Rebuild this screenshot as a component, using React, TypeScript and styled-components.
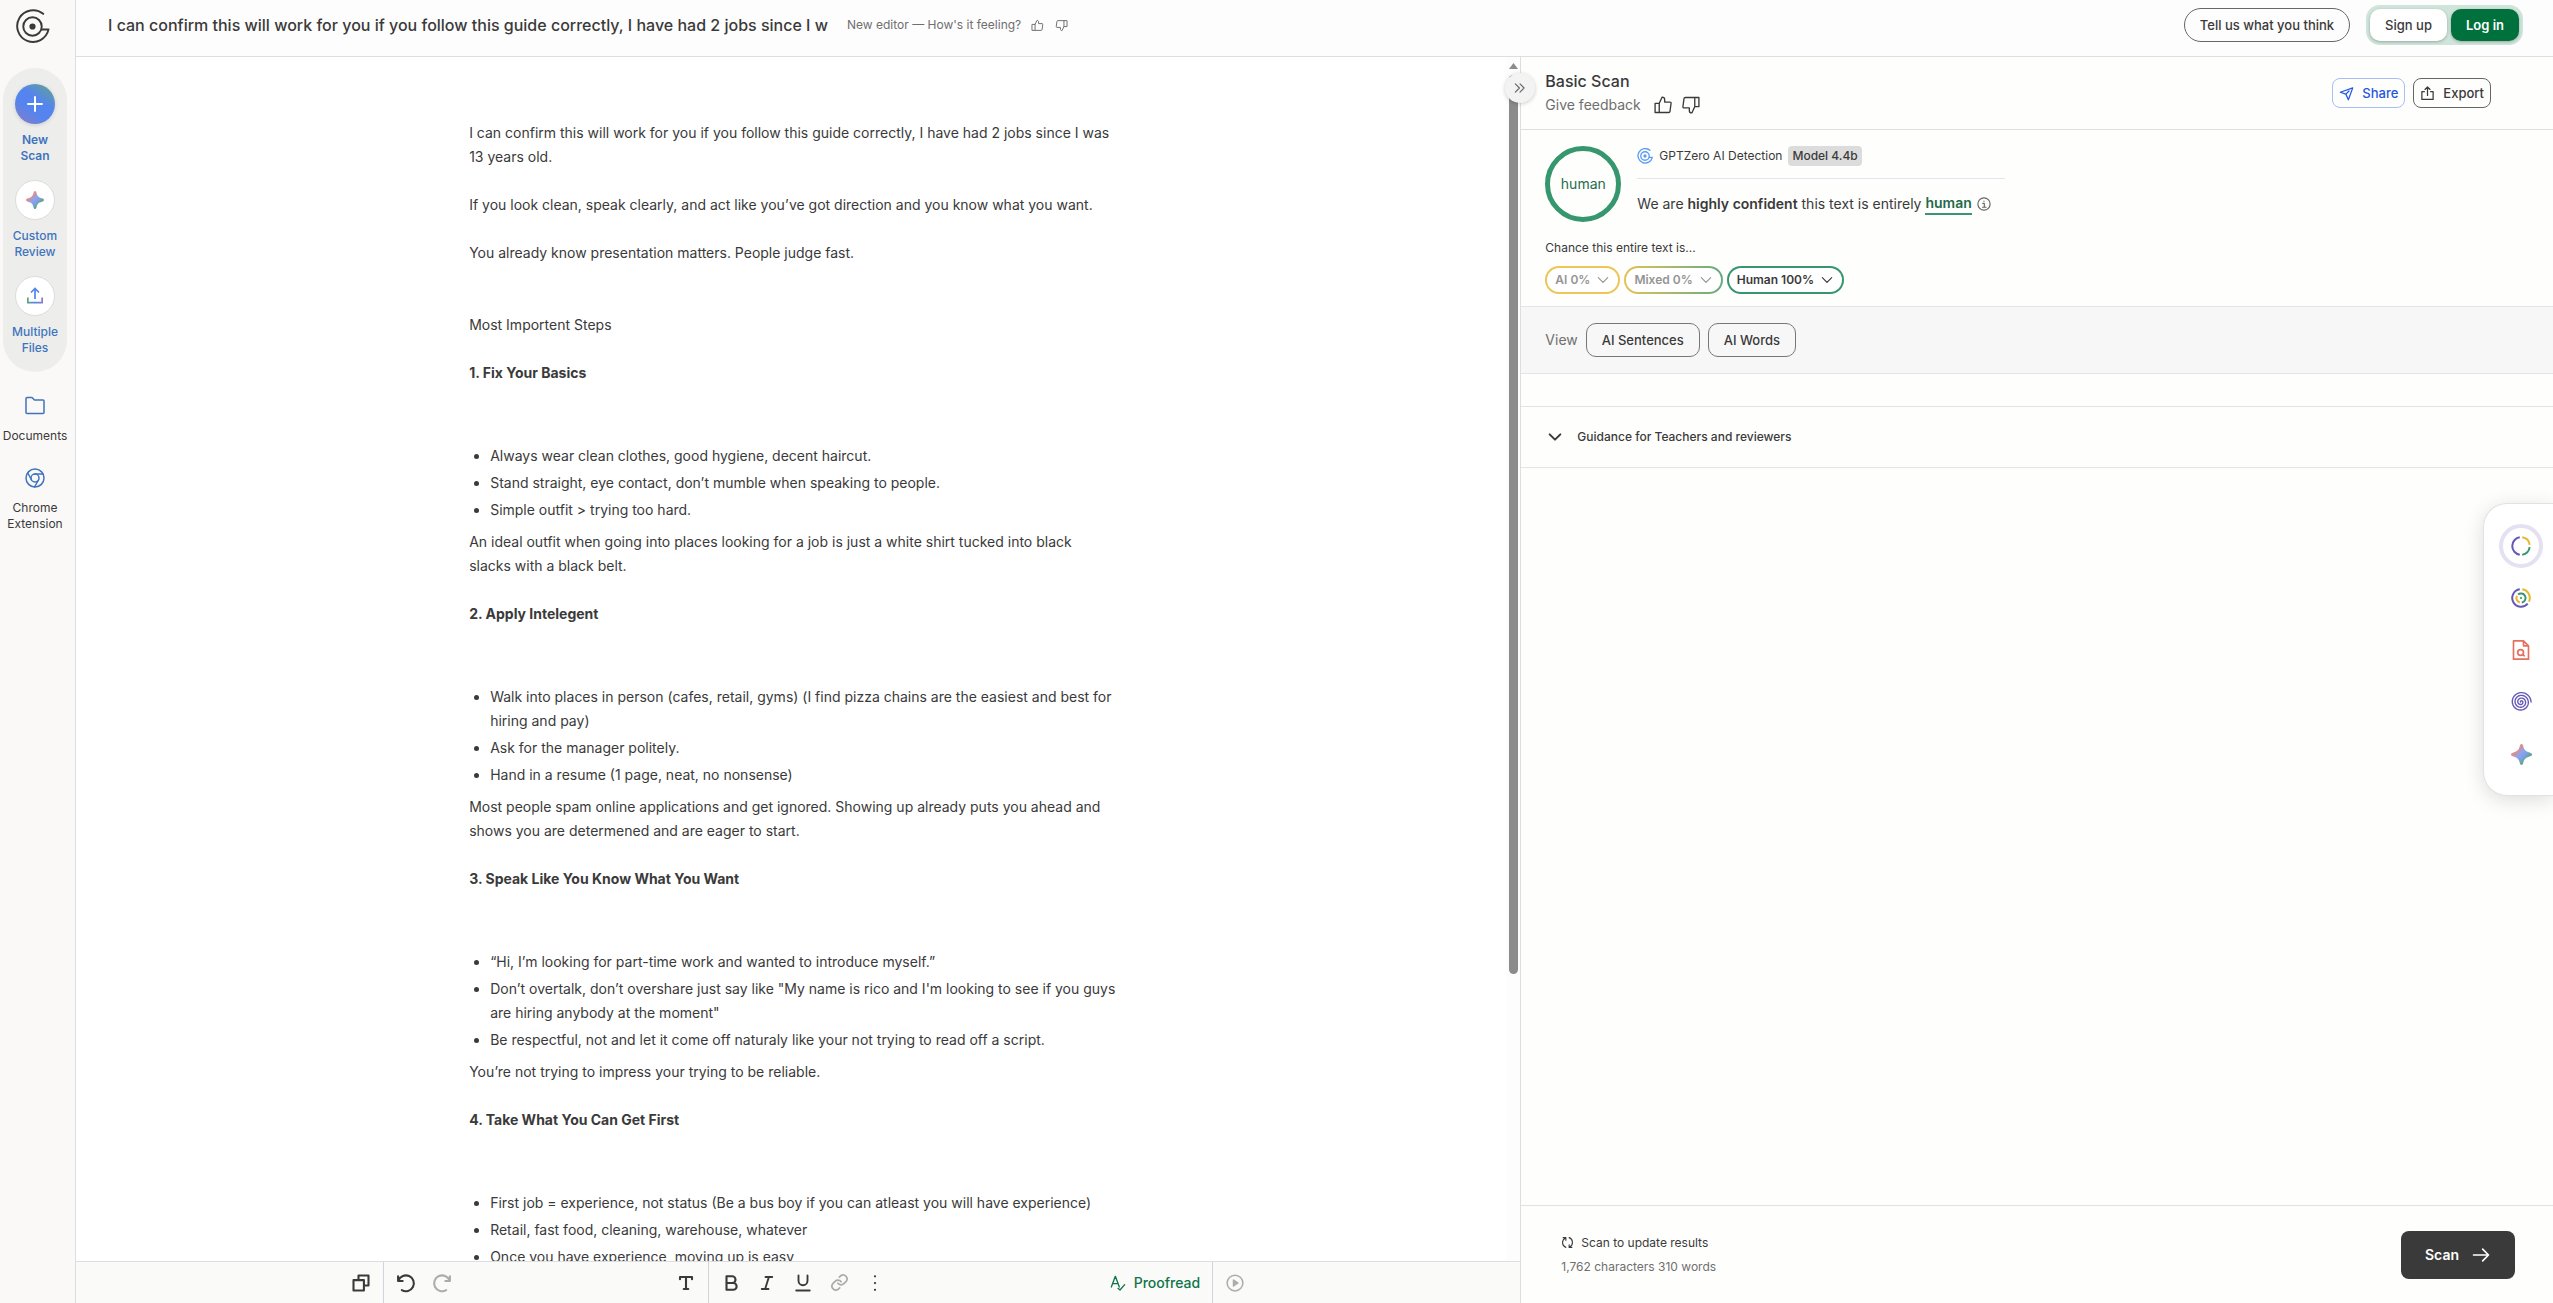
import React from "react";
import styled, { createGlobalStyle, css } from "styled-components";

const ink = "#3a3a3a";
const muted = "#6f6f6f";
const line = "#dedee0";
const green = "#36966e";
const blue = "#3f74bd";

const GlobalStyle = createGlobalStyle`
  * { box-sizing: border-box; }
  body { margin: 0; background: #fff; color: ${ink}; font: 400 14px/20px Inter, "Liberation Sans", sans-serif; }
  button, input { font: inherit; color: inherit; margin: 0; padding: 0; border: 0; background: none; }
  button { cursor: pointer; }
  a { color: inherit; text-decoration: none; }
  svg { display: block; flex: none; }
  h1, h2, h3, p, ul { margin: 0; padding: 0; }
`;

const Page = styled.div`display: flex; height: 100vh; overflow: hidden;`;

/* Sidebar */
const Sidebar = styled.nav`
  width: 76px; flex: none; display: flex; flex-direction: column; align-items: flex-start;
  background: #faf9f8; border-right: 1px solid ${line}; padding: 9px 3px 0;
`;
const LogoLink = styled.a`margin: 0 12px 24px;`;
const ActionGroup = styled.div`
  width: 64px; padding: 16px 0; border-radius: 32px; background: #ededec;
  display: flex; flex-direction: column; gap: 16px;
`;
const NavItem = styled.a<{ $strong?: boolean; $plain?: boolean }>`
  width: 64px; display: flex; flex-direction: column; align-items: center; gap: ${p => (p.$plain ? 12 : 8)}px;
  text-align: center; font-size: 12px; line-height: 16px;
  font-weight: ${p => (p.$strong ? 600 : p.$plain ? 400 : 500)}; color: ${p => (p.$plain ? ink : blue)};
`;
const NavExtras = styled.div`display: flex; flex-direction: column; gap: 24px; padding-top: 24px;`;
const RoundIcon = styled.span<{ $filled?: boolean }>`
  width: 40px; height: 40px; border-radius: 50%; display: grid; place-items: center;
  background: ${p => (p.$filled ? "linear-gradient(35deg, #8c7cc0 0%, #5584ee 38%, #5584ee 60%, #62a882 100%)" : "#fff")};
  border: ${p => (p.$filled ? "0" : "1px solid #dcdcdc")};
  box-shadow: ${p => (p.$filled ? "0 1px 4px #0002" : "none")};
`;

/* Top bar */
const Main = styled.div`flex: 1; min-width: 0; display: flex; flex-direction: column;`;
const TopBar = styled.header`
  height: 57px; flex: none; border-bottom: 1px solid ${line}; padding: 0 30px 6px 32px;
  display: flex; align-items: center; background: #fdfdfd;
`;
const TitleInput = styled.input`width: 733px; font-size: 16px; font-weight: 500; line-height: 24px; outline: 0;`;
const EditorNote = styled.div`display: flex; align-items: center; gap: 8px; padding-left: 6px; font-size: 12px; color: ${muted};`;
const IconButton = styled.button<{ $faded?: boolean; $tight?: boolean }>`
  display: grid; place-items: center; width: ${p => (p.$tight ? 16 : 20)}px; height: 20px; opacity: ${p => (p.$faded ? 0.4 : 1)};
`;
const Account = styled.div`margin-left: auto; display: flex; align-items: center; gap: 16px;`;
const AuthGroup = styled.div`display: flex; gap: 4px; padding: 4px; border-radius: 14px; background: #cfe4da;`;
const Button = styled.button<{ $tone?: "outline" | "white" | "green" }>`
  height: ${p => (p.$tone === "outline" ? 34 : 32)}px; padding: 0 15px; font-size: 13px; font-weight: 500; white-space: nowrap;
  border-radius: 10px;
  ${p => p.$tone === "outline" && css`border: 1px solid #666; border-radius: 17px;`}
  ${p => p.$tone === "white" && css`background: #fff; box-shadow: 0 1px 3px #0004;`}
  ${p => p.$tone === "green" && css`background: #00703c; color: #fff; font-weight: 600; box-shadow: 0 1px 3px #0004;`}
`;

/* Editor */
const Workspace = styled.div`flex: 1; min-height: 0; display: flex;`;
const EditorPane = styled.main`flex: 7 1 0; min-width: 0; display: flex; flex-direction: column; background: #fff;`;
const EditorScroll = styled.div`flex: 1; min-height: 0; display: flex; overflow: hidden;`;
const PageArea = styled.div`flex: 1; min-width: 0; overflow: hidden; padding: 64px 44px 0 48px; display: flex; justify-content: center;`;
const Doc = styled.article`width: 100%; max-width: 648px; font-size: 14px; line-height: 24px;`;
const Paragraph = styled.p<{ $space?: number }>`margin-bottom: ${p => p.$space ?? 24}px;`;
const StepTitle = styled.h3`font-size: 14px; line-height: 24px; font-weight: 700;`;
const Bullets = styled.ul`
  list-style: disc; padding-left: 21px; margin: 59px 0 8px; display: flex; flex-direction: column; gap: 3px;
`;
const ScrollTrack = styled.div`
  width: 14px; flex: none; display: flex; flex-direction: column; align-items: center; gap: 6px; padding-top: 6px; background: #fdfdfd;
`;
const ScrollThumb = styled.div`width: 9px; height: 75%; border-radius: 5px; background: #8b8b8b;`;
const ToolbarWrap = styled.div`height: 42px; flex: none; border-top: 1px solid ${line}; background: #fafaf9; display: flex; justify-content: center;`;
const Toolbar = styled.div`width: 100%; max-width: 894px; display: flex; justify-content: space-between;`;
const Tools = styled.div`display: flex; align-items: center; gap: 12px;`;
const ToolSet = styled.div`display: flex; align-items: center; gap: 16px;`;
const Divider = styled.span`width: 1px; align-self: stretch; background: #d3d3dd;`;
const Proofread = styled.button`display: flex; align-items: center; gap: 8px; color: #0f7548; font-weight: 500; font-size: 14px;`;

/* Results panel */
const Panel = styled.aside`
  flex: 5 1 0; min-width: 0; display: flex; flex-direction: column; position: relative;
  border-left: 1px solid ${line}; background: #fefefd;
`;
const Collapse = styled.button`
  position: absolute; left: -16px; top: 16px; width: 30px; height: 30px; border-radius: 50%;
  display: grid; place-items: center; background: #f3f3f3; box-shadow: 0 1px 4px #0003; color: #666;
`;
const PanelHead = styled.div`
  display: flex; justify-content: space-between; align-items: center; height: 73px;
  padding: 0 62px 0 24px; border-bottom: 1px solid ${line};
`;
const PanelTitle = styled.h1`font-size: 16px; line-height: 24px; font-weight: 500;`;
const Feedback = styled.div`display: flex; align-items: center; gap: 12px; height: 24px; color: ${muted}; font-size: 14px;`;
const Votes = styled.span`display: flex; gap: 8px; color: ${ink};`;
const Row = styled.div<{ $gap?: number }>`display: flex; align-items: center; gap: ${p => p.$gap ?? 8}px;`;
const SmallButton = styled.button<{ $blue?: boolean }>`
  height: 30px; padding: 0 6px; display: flex; align-items: center; gap: 8px; border-radius: 8px;
  font-size: 13px; font-weight: 500; border: 1px solid ${p => (p.$blue ? "#a9bdf8" : "#666")}; color: ${p => (p.$blue ? "#2457e0" : ink)};
`;
const Result = styled.section`padding: 16px 24px 12px; border-bottom: 1px solid #e4e4e8;`;
const Verdict = styled.div`display: flex; gap: 16px;`;
const Ring = styled.div`
  width: 76px; height: 76px; flex: none; border-radius: 50%; border: 5px solid ${green}; color: #266b50;
  display: grid; place-items: center; font-size: 14px;
`;
const VerdictText = styled.div`display: flex; flex-direction: column; min-width: 368px;`;
const Detector = styled.div`
  display: flex; align-items: center; gap: 6px; font-size: 12px; padding-bottom: 12px; border-bottom: 1px solid #e4e4ee;
`;
const Badge = styled.span`padding: 0 4px; border-radius: 4px; background: #dcdcdc; font-weight: 500; line-height: 20px;`;
const Sentence = styled.p`
  display: flex; align-items: center; padding-top: 14px; white-space: pre; font-size: 14px; line-height: 20px;
  b { font-weight: 600; }
`;
const HumanWord = styled.b`color: #1f6b4b; border-bottom: 2px solid ${green}; margin-right: 5px;`;
const ChanceLabel = styled.p`font-size: 12px; line-height: 16px; padding: 18px 0 10px;`;
const pillEdge = {
  ai: "#ecc656, #ecc656",
  mixed: "#e3c458, #66ab83",
  human: `${green}, ${green}`,
};
const Pill = styled.button<{ $kind: keyof typeof pillEdge }>`
  height: 28px; padding: 0 8px; display: flex; align-items: center; gap: 6px; border: 2px solid transparent; border-radius: 14px;
  background: linear-gradient(#fff, #fff) padding-box, linear-gradient(90deg, ${p => pillEdge[p.$kind]}) border-box;
  font-size: 12px; font-weight: 600; color: ${p => (p.$kind === "human" ? ink : "#949494")};
`;
const ViewBar = styled.section`
  display: flex; align-items: center; gap: 8px; height: 67px; padding: 0 24px; background: #f7f7f7; border-bottom: 1px solid #e4e4e8; color: ${muted};
`;
const ViewButton = styled.button`
  height: 34px; padding: 0 15px; border: 1px solid #777; border-radius: 10px; font-size: 13px; font-weight: 500; color: ${ink};
`;
const Guidance = styled.button`
  width: 100%; height: 62px; margin-top: 32px; padding: 0 26px; display: flex; align-items: center; gap: 14px; text-align: left;
  border-top: 1px solid #e4e4e8; border-bottom: 1px solid #e4e4e8; font-size: 12px; font-weight: 500;
`;
const PanelFoot = styled.footer`
  margin-top: auto; height: 98px; padding: 0 38px 0 40px; border-top: 1px solid #e2e2e2;
  display: flex; align-items: center; justify-content: space-between;
`;
const Stats = styled.div`font-size: 12px; line-height: 24px; color: ${muted};`;
const UpdateNote = styled.div`display: flex; align-items: center; gap: 7px; color: ${ink};`;
const ScanButton = styled.button`
  height: 48px; padding: 0 24px; display: flex; align-items: center; gap: 12px; border-radius: 8px; background: #3a3a3a; color: #fff; font-size: 14px; font-weight: 600;
`;

/* Dock over the right edge */
const Dock = styled.div`
  position: fixed; right: 0; top: 503px; width: 70px; padding: 20px 0 19px 15px; border-radius: 24px 0 0 24px;
  background: #fff; border: 1px solid #e2e2e2; border-right: 0; box-shadow: 0 4px 20px #0002; display: flex; flex-direction: column; gap: 8px;
`;
const DockButton = styled.button<{ $active?: boolean }>`
  width: 44px; height: 44px; border-radius: 50%; display: grid; place-items: center; border: 4px solid ${p => (p.$active ? "#e4e2f2" : "transparent")};
`;

/* Icons */
const Icon = ({ size = 16, w = 1.5, box = 24, color = "currentColor", children }: { size?: number; w?: number; box?: number; color?: string; children: React.ReactNode }) => (
  <svg width={size} height={size} viewBox={`0 0 ${box} ${box}`} fill="none" stroke={color} strokeWidth={w} strokeLinecap="round" strokeLinejoin="round" aria-hidden="true">{children}</svg>
);
const Logo = ({ size, color = ink, w = 2 }: { size: number; color?: string; w?: number }) => (
  <Icon size={size} box={36} color={color} w={w}>
    <path d="M29 5A16.3 16.3 0 1 0 34.500 21H27.500" />
    <circle cx="18" cy="18" r="9.500" />
    <circle cx="18" cy="18" r="2.200" fill={color} />
  </Icon>
);
const Thumb = ({ size, down, w = 1.5 }: { size: number; down?: boolean; w?: number }) => (
  <Icon size={size} w={w}>
    <g transform={down ? "rotate(180 12 12)" : undefined}>
      <path d="M2.500 10h5v11h-5zM7.500 10 11 2.500c1.800 0 3 1.200 3 3V8.500h6.500c.8 0 1.300.6 1.200 1.400l-1.300 9.700c-.1.800-.8 1.400-1.600 1.400H7.500" />
    </g>
  </Icon>
);
const Sparkle = ({ size, id }: { size: number; id: string }) => (
  <svg width={size} height={size} viewBox="0 0 24 24" aria-hidden="true">
    <defs><linearGradient id={id} x1="0" y1="0" x2="1" y2="1"><stop offset=".27" stopColor="#e58c84" /><stop offset=".46" stopColor="#8ba5ee" /><stop offset=".6" stopColor="#7e9fe8" /><stop offset=".74" stopColor="#5aa879" /></linearGradient></defs>
    <path fill={`url(#${id})`} d="M12 0c1.200 0 1.600 1 2 2.500 1.200 4.300 2.600 5.900 7.200 7.100C23 10.200 24 10.800 24 12s-1 1.700-2.800 2.300c-4.600 1.300-6 2.800-7.200 7.200C13.600 23 13.200 24 12 24s-1.600-1-2-2.500c-1.200-4.400-2.600-5.900-7.200-7.200C1 13.700 0 13.200 0 12s1-1.800 2.800-2.400C7.400 8.400 8.800 6.800 10 2.500 10.400 1 10.800 0 12 0Z" />
  </svg>
);
const Upload = () => (
  <svg width="18" height="18" viewBox="0 0 18 18" fill="none" strokeWidth="1.700" aria-hidden="true">
    <defs><linearGradient id="tray"><stop stopColor="#5aa879" /><stop offset=".5" stopColor="#5584ee" /><stop offset="1" stopColor="#8c7cc0" /></linearGradient></defs>
    <path fill="url(#tray)" stroke="none" d="M1 10.500h1.700v4.300h12.600v-4.300H17v6H1z" /><path stroke="#5584ee" d="M9 12V2M5 5.500l4-4 4 4" />
  </svg>
);
const ChevronDown = ({ size, w }: { size: number; w?: number }) => <Icon size={size} w={w}><path d="m4 8 8 8 8-8" /></Icon>;

const arc = (r: number, a: number, b: number) => {
  const at = (d: number) => `${12 + r * Math.sin((d * Math.PI) / 180)} ${12 - r * Math.cos((d * Math.PI) / 180)}`;
  return `M${at(a)}A${r} ${r} 0 ${b - a > 180 ? 1 : 0} 1 ${at(b)}`;
};
const spiral = Array.from({ length: 120 }, (_, i) => {
  const t = (1 - i / 119) * Math.PI * 7;
  const r = 0.5 + (i / 119) * 10.5;
  return `${i ? "L" : "M"}${12 + r * Math.cos(t)} ${12 + r * Math.sin(-t)}`;
}).join("");
const Segments = () => (
  <svg width="20" height="20" viewBox="0 0 24 24" fill="none" strokeWidth="2.400" aria-hidden="true">
    <path stroke="#6559b5" d={arc(10.5, 188, 352)} /><path stroke="#e6b830" d={arc(10.5, 8, 82)} /><path stroke="#36966e" d={arc(10.5, 98, 172)} />
  </svg>
);
const Target = () => (
  <svg width="20" height="20" viewBox="0 0 24 24" fill="none" strokeWidth="2.400" aria-hidden="true">
    <path stroke="#6559b5" d={arc(10.5, 130, 352)} /><path stroke="#e6b830" d={arc(10.5, 8, 115)} />
    <path stroke="#36966e" d={arc(5.5, -40, 170)} /><path stroke="#e6b830" d={arc(5.5, 195, 300)} /><circle cx="12" cy="12" r="1.300" fill="#36966e" />
  </svg>
);

const steps = [
  { title: "1. Fix Your Basics", items: ["Always wear clean clothes, good hygiene, decent haircut.", "Stand straight, eye contact, don’t mumble when speaking to people.", "Simple outfit > trying too hard."], after: "An ideal outfit when going into places looking for a job is just a white shirt tucked into black slacks with a black belt." },
  { title: "2. Apply Intelegent", items: ["Walk into places in person (cafes, retail, gyms) (I find pizza chains are the easiest and best for hiring and pay)", "Ask for the manager politely.", "Hand in a resume (1 page, neat, no nonsense)"], after: "Most people spam online applications and get ignored. Showing up already puts you ahead and shows you are determened and are eager to start." },
  { title: "3. Speak Like You Know What You Want", items: ["“Hi, I’m looking for part-time work and wanted to introduce myself.”", "Don’t overtalk, don’t overshare just say like \"My name is rico and I'm looking to see if you guys are hiring anybody at the moment\"", "Be respectful, not and let it come off naturaly like your not trying to read off a script."], after: "You’re not trying to impress your trying to be reliable." },
  { title: "4. Take What You Can Get First", items: ["First job = experience, not status (Be a bus boy if you can atleast you will have experience)", "Retail, fast food, cleaning, warehouse, whatever", "Once you have experience, moving up is easy"], after: "" },
];

export default function App() {
  return (
    <Page>
      <GlobalStyle />
      <Sidebar aria-label="Main">
        <LogoLink href="#" aria-label="GPTZero"><Logo size={35} /></LogoLink>
        <ActionGroup>
          <NavItem href="#" $strong><RoundIcon $filled><Icon size={16} box={16} w={2} color="#fff"><path d="M8 1v14M1 8h14" /></Icon></RoundIcon><span>New<br />Scan</span></NavItem>
          <NavItem href="#"><RoundIcon><Sparkle size={18} id="nav-spark" /></RoundIcon><span>Custom<br />Review</span></NavItem>
          <NavItem href="#"><RoundIcon><Upload /></RoundIcon><span>Multiple<br />Files</span></NavItem>
        </ActionGroup>
        <NavExtras>
          <NavItem href="#" $plain>
            <Icon size={20} box={20} color={blue}><path d="M1 16.500v-14c0-.5.400-1 1-1h5l2.500 2.500H18c.6 0 1 .4 1 1v11.500c0 .6-.4 1-1 1H2c-.6 0-1-.4-1-1Z" /></Icon>
            Documents
          </NavItem>
          <NavItem href="#" $plain>
            <Icon size={20} box={20} color={blue}><circle cx="10" cy="10" r="9" /><circle cx="10" cy="10" r="4" /><path d="M10 6h8M6.500 12 2.800 5M13.500 12l-4 7" /></Icon>
            <span>Chrome<br />Extension</span>
          </NavItem>
        </NavExtras>
      </Sidebar>
      <Main>
        <TopBar>
          <TitleInput aria-label="Document title" defaultValue="I can confirm this will work for you if you follow this guide correctly, I have had 2 jobs since I w" />
          <EditorNote>
            New editor — How's it feeling?
            <IconButton $tight aria-label="Like editor"><Thumb size={13} w={1.8} /></IconButton>
            <IconButton $tight aria-label="Dislike editor"><Thumb size={13} w={1.8} down /></IconButton>
          </EditorNote>
          <Account>
            <Button $tone="outline">Tell us what you think</Button>
            <AuthGroup><Button $tone="white">Sign up</Button><Button $tone="green">Log in</Button></AuthGroup>
          </Account>
        </TopBar>
        <Workspace>
          <EditorPane>
            <EditorScroll>
              <PageArea>
                <Doc>
                  <Paragraph>I can confirm this will work for you if you follow this guide correctly, I have had 2 jobs since I was 13 years old.</Paragraph>
                  <Paragraph>If you look clean, speak clearly, and act like you’ve got direction and you know what you want.</Paragraph>
                  <Paragraph $space={48}>You already know presentation matters. People judge fast.</Paragraph>
                  <Paragraph>Most Importent Steps</Paragraph>
                  {steps.map(s => (
                    <section key={s.title}>
                      <StepTitle>{s.title}</StepTitle>
                      <Bullets>{s.items.map(i => <li key={i}>{i}</li>)}</Bullets>
                      {s.after && <Paragraph>{s.after}</Paragraph>}
                    </section>
                  ))}
                </Doc>
              </PageArea>
              <ScrollTrack aria-hidden="true">
                <svg width="9" height="6" viewBox="0 0 9 6"><path d="M4.500 0 9 6H0z" fill="#8b8b8b" /></svg>
                <ScrollThumb />
              </ScrollTrack>
            </EditorScroll>
            <ToolbarWrap>
              <Toolbar>
                <Tools>
                  <IconButton aria-label="Copy"><Icon size={20} w={2.5}><path d="M9 8V3h12v12h-5M3 8.500h12.500V21H3z" /></Icon></IconButton>
                  <Divider />
                  <ToolSet>
                    <IconButton aria-label="Undo"><Icon size={20} w={2.5}><path d="M2.500 4v5.500H8M3 9a9.500 9.500 0 1 1 4 11.500" /></Icon></IconButton>
                    <IconButton $faded aria-label="Redo"><Icon size={20} w={2.5}><path d="M21.500 4v5.500H16M21 9a9.500 9.500 0 1 0-4 11.500" /></Icon></IconButton>
                  </ToolSet>
                </Tools>
                <Tools>
                  <IconButton aria-label="Text style"><Icon size={18} w={2.8}><path d="M4 7V4h16v3M12 4v16M9 20h6" /></Icon></IconButton>
                  <Divider />
                  <ToolSet>
                    <IconButton aria-label="Bold"><Icon size={18} w={2.8}><path d="M6 3h7.500a4.500 4.500 0 0 1 0 9H6zM6 12h9a4.500 4.500 0 0 1 0 9H6z" /></Icon></IconButton>
                    <IconButton aria-label="Italic"><Icon size={18} w={2.5}><path d="M10 4h9M5 20h9M14.500 4l-5 16" /></Icon></IconButton>
                    <IconButton aria-label="Underline"><Icon size={18} w={2.5}><path d="M6 2v7a6 6 0 0 0 12 0V2M3 22h18" /></Icon></IconButton>
                    <IconButton $faded aria-label="Link"><Icon size={19} w={2.2}><path d="M10 13a5 5 0 0 0 7.500.500l3-3a5 5 0 0 0-7-7l-1.700 1.700M14 11a5 5 0 0 0-7.500-.5l-3 3a5 5 0 0 0 7 7l1.700-1.700" /></Icon></IconButton>
                    <IconButton aria-label="More"><Icon size={18} w={3}><path d="M12 3v.010M12 12v.010M12 21v.010" /></Icon></IconButton>
                  </ToolSet>
                </Tools>
                <Tools>
                  <Proofread><Icon size={16} w={2}><path d="M2 18 8 2l6 16M4 13h8M12 20l3 2.500 7-8" /></Icon>Proofread</Proofread>
                  <Divider />
                  <IconButton $faded aria-label="Play"><Icon size={18} w={2}><circle cx="12" cy="12" r="10.500" /><path d="m10 8 6 4-6 4z" fill="currentColor" /></Icon></IconButton>
                </Tools>
              </Toolbar>
            </ToolbarWrap>
          </EditorPane>
          <Panel>
            <Collapse aria-label="Collapse panel"><Icon size={14} w={2}><path d="m4 5 7 7-7 7M12 5l7 7-7 7" /></Icon></Collapse>
            <PanelHead>
              <div>
                <PanelTitle>Basic Scan</PanelTitle>
                <Feedback>Give feedback
                  <Votes>
                    <IconButton aria-label="Good result"><Thumb size={20} w={1.6} /></IconButton>
                    <IconButton aria-label="Bad result"><Thumb size={20} w={1.6} down /></IconButton>
                  </Votes>
                </Feedback>
              </div>
              <Row>
                <SmallButton $blue><Icon size={15} w={2}><path d="M2 10 22 3l-7 19-4-9zM11 13l5-5" /></Icon>Share</SmallButton>
                <SmallButton><Icon size={15} w={2}><path d="M7 9H3v12.500h18V9h-4M12 15V2M8 5.500 12 1.500l4 4" /></Icon>Export</SmallButton>
              </Row>
            </PanelHead>
            <Result>
              <Verdict>
                <Ring>human</Ring>
                <VerdictText>
                  <Detector><Logo size={16} w={3} color="#5b9df5" />GPTZero AI Detection <Badge>Model 4.4b</Badge></Detector>
                  <Sentence>We are <b>highly confident</b> this text is entirely <HumanWord>human</HumanWord>
                    <Icon size={14} w={2} color="#666"><circle cx="12" cy="12" r="10.500" /><path d="M10 11h2.500v6M9.500 17.500h6M12 7v.100" /></Icon>
                  </Sentence>
                </VerdictText>
              </Verdict>
              <ChanceLabel>Chance this entire text is...</ChanceLabel>
              <Row $gap={4}>
                <Pill $kind="ai">AI 0% <ChevronDown size={14} w={2} /></Pill>
                <Pill $kind="mixed">Mixed 0% <ChevronDown size={14} w={2} /></Pill>
                <Pill $kind="human">Human 100% <ChevronDown size={14} w={2} /></Pill>
              </Row>
            </Result>
            <ViewBar>View <ViewButton>AI Sentences</ViewButton><ViewButton>AI Words</ViewButton></ViewBar>
            <Guidance><ChevronDown size={16} w={3} />Guidance for Teachers and reviewers</Guidance>
            <PanelFoot>
              <Stats>
                <UpdateNote><Icon size={13} w={2}><path d="M9 21C1 18 1 7 8 4M4 3h5v5M15 3c8 3 8 14 1 17M20 21h-5v-5" /></Icon>Scan to update results</UpdateNote>
                1,762 characters 310 words
              </Stats>
              <ScanButton>Scan <Icon size={20} w={2}><path d="M3 12h18M14 5l7 7-7 7" /></Icon></ScanButton>
            </PanelFoot>
          </Panel>
        </Workspace>
      </Main>
      <Dock>
        <DockButton $active aria-label="Basic scan"><Segments /></DockButton>
        <DockButton aria-label="Advanced scan"><Target /></DockButton>
        <DockButton aria-label="Plagiarism"><Icon size={20} w={2} color="#e4705f"><path d="M3 1h12l6 6v16H3zM15 1v6h6" /><circle cx="11.500" cy="15" r="3.500" /><path d="m14 17.500 2 1.500" /></Icon></DockButton>
        <DockButton aria-label="Hallucinations"><Icon size={22} w={1.5} color="#6559b5"><path d={spiral} /></Icon></DockButton>
        <DockButton aria-label="Custom review"><Sparkle size={21} id="dock-spark" /></DockButton>
      </Dock>
    </Page>
  );
}
